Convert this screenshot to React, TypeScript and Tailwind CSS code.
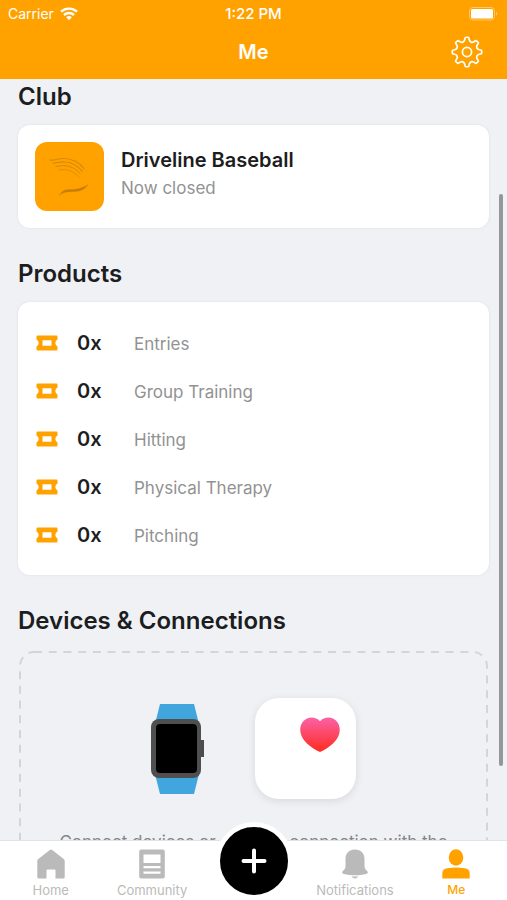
import React from "react";

const products = ["Entries", "Group Training", "Hitting", "Physical Therapy", "Pitching"];

function WifiIcon() {
  return (
    <svg width="18" height="14" viewBox="0 0 18 14" fill="none" stroke="#fff" strokeWidth="2.4" aria-hidden="true">
      <path d="M1 4.7C5.5.6 12.500.6 17 4.700" />
      <path d="M4 8c2.800-2.600 7.200-2.600 10 0" />
      <path d="M6.200 10.200c1.600-1.500 4-1.500 5.600 0L9 13.200Z" fill="#fff" stroke="none" />
    </svg>
  );
}

function BatteryIcon() {
  return (
    <svg width="30" height="14" viewBox="0 0 30 14" aria-hidden="true">
      <rect x="0.500" y="0.500" width="25" height="12.500" rx="3.500" fill="none" stroke="#ffc766" />
      <rect x="2" y="2" width="22" height="9.500" rx="1.500" fill="#fff" />
      <path d="M27 4.800c1.500.8 1.500 3.200 0 4Z" fill="#ffc766" />
    </svg>
  );
}

function gearPath() {
  const teeth = 8;
  const pts: string[] = [];
  const at = (r: number, deg: number) => {
    const a = (deg * Math.PI) / 180;
    return `${(16 + r * Math.sin(a)).toFixed(2)} ${(16 - r * Math.cos(a)).toFixed(2)}`;
  };
  for (let i = 0; i < teeth; i++) {
    const c = (i * 360) / teeth;
    pts.push(`${i === 0 ? "M" : "L"}${at(14.6, c - 6)}`);
    pts.push(`Q${at(15, c)} ${at(14.6, c + 6)}`);
    pts.push(`Q${at(14.2, c + 9)} ${at(12.4, c + 10.5)}`);
    pts.push(`Q${at(9.2, c + 22.5)} ${at(12.4, c + 34.5)}`);
    pts.push(`Q${at(14.2, c + 36)} ${at(14.6, c + 39)}`);
  }
  return pts.join(" ") + "Z";
}

function GearIcon() {
  return (
    <svg width="32" height="32" viewBox="0 0 32 32" fill="none" stroke="#fff" strokeWidth="1.700" strokeLinejoin="round" aria-hidden="true">
      <path d={gearPath()} />
      <circle cx="16" cy="16" r="4.600" />
    </svg>
  );
}

function ClubLogo() {
  return (
    <svg className="size-[69px] shrink-0 rounded-xl bg-[#ffa200]" viewBox="0 0 69 69" fill="none" stroke="#d58a08" strokeLinecap="round" aria-hidden="true">
      <path d="M15 18c5 1 7-1.500 13-1.500 9 0 16 3.500 21 10" strokeWidth="1.200" />
      <path d="M18 21c5 0 7-1.500 12-1 7 .5 12 3 17 9" strokeWidth="1.200" />
      <path d="M21 24.500c5-.5 6-1.500 11-.5 5 .8 9 3 13 7.500" strokeWidth="1" />
      <path d="M24 28c4-.5 6-.5 9 .2 4 1 8 3.500 11 7" strokeWidth="0.800" />
      <path d="M24.500 53c2.500-4.500 6-5.500 11-5.500 7 0 12-1.500 17.500-5-3.500 5.500-8 7-14.500 7.200-6 .1-10 .3-14 3.300Z" fill="#c47d08" strokeWidth="0.400" />
    </svg>
  );
}

function TicketIcon() {
  return (
    <svg className="w-[22px] shrink-0 self-center" height="16" viewBox="0 0 22 16" aria-hidden="true">
      <path
        fillRule="evenodd"
        fill="#ffa200"
        d="M1.500.5h19q1 0 1 1v3q-2.200 1.200-2.200 3.500t2.200 3.500v3q0 1-1 1h-19q-1 0-1-1v-3q2.200-1.200 2.200-3.500T.5 4.500v-3q0-1 1-1ZM6.500 5.300v5.400h9V5.300Z"
      />
    </svg>
  );
}

function WatchIcon() {
  return (
    <svg width="54" height="92" viewBox="0 0 54 92" aria-hidden="true">
      <path d="M9 1h34l5 20H4ZM4 71h44l-5 20H9Z" fill="#41a5de" />
      <rect x="49" y="37" width="4" height="17" fill="#4c4c4c" />
      <rect x="0" y="16" width="50" height="59" rx="8" fill="#4f4f4f" />
      <rect x="5" y="21" width="41" height="49" rx="4" fill="#000" />
    </svg>
  );
}

function HeartIcon() {
  return (
    <svg width="40" height="35" viewBox="0 0 40 35" aria-hidden="true">
      <defs>
        <linearGradient id="heart" x1="0" y1="0" x2="0" y2="1">
          <stop offset="0" stopColor="#fb62a8" />
          <stop offset="1" stopColor="#ff2a1f" />
        </linearGradient>
      </defs>
      <path fill="url(#heart)" d="M20 4.200C16.500.3 11-.6 6.500 1.700 1.500 4.500-.6 10 .6 16 2.500 24 10 30.500 20 35c10-4.500 17.500-11 19.400-19 1.200-6-.9-11.500-5.900-14.300C29-.6 23.500.3 20 4.200Z" />
    </svg>
  );
}

function HomeIcon() {
  return (
    <svg width="28" height="30" viewBox="0 0 28 30" fill="currentColor" aria-hidden="true">
      <path d="M12.800.9q1.200-1 2.400 0L27 10.300q.7.600.7 1.500V28q0 1.500-1.500 1.500H18.500V21.500q0-1-1-1h-7q-1 0-1 1v8H1.800Q.3 29.500.3 28V11.800q0-.9.7-1.500Z" />
    </svg>
  );
}

function CommunityIcon() {
  return (
    <svg width="28" height="30" viewBox="0 0 28 30" aria-hidden="true">
      <path
        fill="currentColor"
        fillRule="evenodd"
        d="M3.200.5h21.600q2 0 2 2v25q0 2-2 2H3.200q-2 0-2-2v-25q0-2 2-2ZM5.500 5.500v8.500h17V5.500ZM5.500 17v2.200h17V17ZM5.500 22.500v2.200h17v-2.200Z"
      />
    </svg>
  );
}

function BellIcon() {
  return (
    <svg width="28" height="30" viewBox="0 0 28 30" fill="currentColor" aria-hidden="true">
      <path d="M14 .5c6 0 9.500 4 9.500 9.500v7c0 3 1.500 3.500 3 5.500.8 1.200.3 2-1.500 2.500-6 1.800-16 1.800-22 0-1.800-.5-2.300-1.300-1.500-2.500 1.500-2 3-2.500 3-5.500v-7C4.500 4.500 8 .5 14 .5Z" />
      <path d="M10.800 27.600h6.400c-.8 2.400-5.600 2.400-6.400 0Z" />
    </svg>
  );
}

function PersonIcon() {
  return (
    <svg width="28" height="30" viewBox="0 0 28 30" fill="currentColor" aria-hidden="true">
      <ellipse cx="14" cy="8.500" rx="7.300" ry="8.200" />
      <path d="M.3 29.500v-5.500q0-4.500 6.500-5 7.200-.8 14.400 0 6.500.5 6.500 5v5.500Z" />
    </svg>
  );
}

function SectionTitle({ children }: { children: React.ReactNode }) {
  return <h2 className="mb-3 text-2xl font-semibold text-[#1c1d20]">{children}</h2>;
}

function Tab({ label, active, children }: { label: string; active?: boolean; children: React.ReactNode }) {
  return (
    <a
      href="#"
      aria-current={active ? "page" : undefined}
      className={`flex flex-1 flex-col items-center gap-[3px] pt-2 leading-4 ${active ? "text-xs font-medium text-[#ffa200]" : "text-[13px] text-[#bababa]"}`}
    >
      {children}
      <span>{label}</span>
    </a>
  );
}

export default function App() {
  return (
    <div className="flex h-screen flex-col overflow-hidden bg-[#eff1f5] font-['Inter',sans-serif]">
      <header className="shrink-0 bg-[#ffa200] text-white">
        <div className="grid h-7 grid-cols-3 items-center px-2 text-sm">
          <div className="flex items-center gap-1.5">
            <span>Carrier</span>
            <WifiIcon />
          </div>
          <span className="text-center text-[15px] font-medium">1:22 PM</span>
          <div className="flex justify-end">
            <BatteryIcon />
          </div>
        </div>
        <div className="grid h-[51px] grid-cols-3 items-center px-6 pb-[3px]">
          <h1 className="col-start-2 text-center text-xl font-semibold">Me</h1>
          <button type="button" aria-label="Settings" className="justify-self-end">
            <GearIcon />
          </button>
        </div>
      </header>

      <main className="relative min-h-0 flex-1 overflow-hidden px-[18px] pt-0.5">
        <section className="mb-[30px]">
          <SectionTitle>Club</SectionTitle>
          <div className="flex gap-[17px] rounded-xl bg-white p-[17px] shadow-[0_0_3px_rgba(0,0,0,0.08)]">
            <ClubLogo />
            <div className="pt-1">
              <h3 className="text-xl leading-7 font-semibold text-[#1c1d20]">Driveline Baseball</h3>
              <p className="text-[17px] leading-7 text-[#929292]">Now closed</p>
            </div>
          </div>
        </section>

        <section className="mb-[30px]">
          <SectionTitle>Products</SectionTitle>
          <ul className="rounded-xl bg-white px-[18px] pt-[17px] pb-4 shadow-[0_0_3px_rgba(0,0,0,0.08)]">
            {products.map((name) => (
              <li key={name} className="flex h-12 items-center">
                <TicketIcon />
                <div className="ml-[19px] flex items-baseline">
                  <span className="w-[57px] text-xl font-semibold text-[#1c1d20]">0x</span>
                  <span className="text-[17px] text-[#929292]">{name}</span>
                </div>
              </li>
            ))}
          </ul>
        </section>

        <section>
          <SectionTitle>Devices &amp; Connections</SectionTitle>
          <div className="relative px-8 pt-[49px] pb-10">
            <svg className="absolute inset-0 size-full overflow-visible px-0.5 py-[3px]" fill="none" aria-hidden="true">
              <rect width="100%" height="100%" rx="14" stroke="#d3d5d9" strokeWidth="2" strokeDasharray="8 6.700" />
            </svg>
            <div className="flex items-center justify-center gap-[50px]">
              <WatchIcon />
              <div className="flex h-[101px] w-[101px] justify-end rounded-3xl bg-white pt-[19px] pr-4 shadow-[0_2px_8px_rgba(0,0,0,0.1)]">
                <HeartIcon />
              </div>
            </div>
            <p className="mt-[31px] text-center text-[17px] leading-6 text-[#85868a]">
              Connect devices or set up a connection with the
            </p>
          </div>
        </section>

        <div className="absolute top-[115px] right-1 h-[572px] w-1 rounded-full bg-[#95979b]" />
      </main>

      <nav className="relative flex h-[60px] shrink-0 border-t border-[#e2e3e6] bg-white">
        <Tab label="Home">
          <HomeIcon />
        </Tab>
        <Tab label="Community">
          <CommunityIcon />
        </Tab>
        <div className="flex flex-1 justify-center">
          <button
            type="button"
            aria-label="Add"
            className="absolute -top-[19px] flex size-[78px] items-center justify-center rounded-full border-5 border-white bg-black text-white"
          >
            <svg width="26" height="26" viewBox="0 0 26 26" stroke="currentColor" strokeWidth="4" strokeLinecap="round" aria-hidden="true">
              <path d="M13 2.500v21M2.500 13h21" />
            </svg>
          </button>
        </div>
        <Tab label="Notifications">
          <BellIcon />
        </Tab>
        <Tab label="Me" active>
          <PersonIcon />
        </Tab>
      </nav>
    </div>
  );
}
